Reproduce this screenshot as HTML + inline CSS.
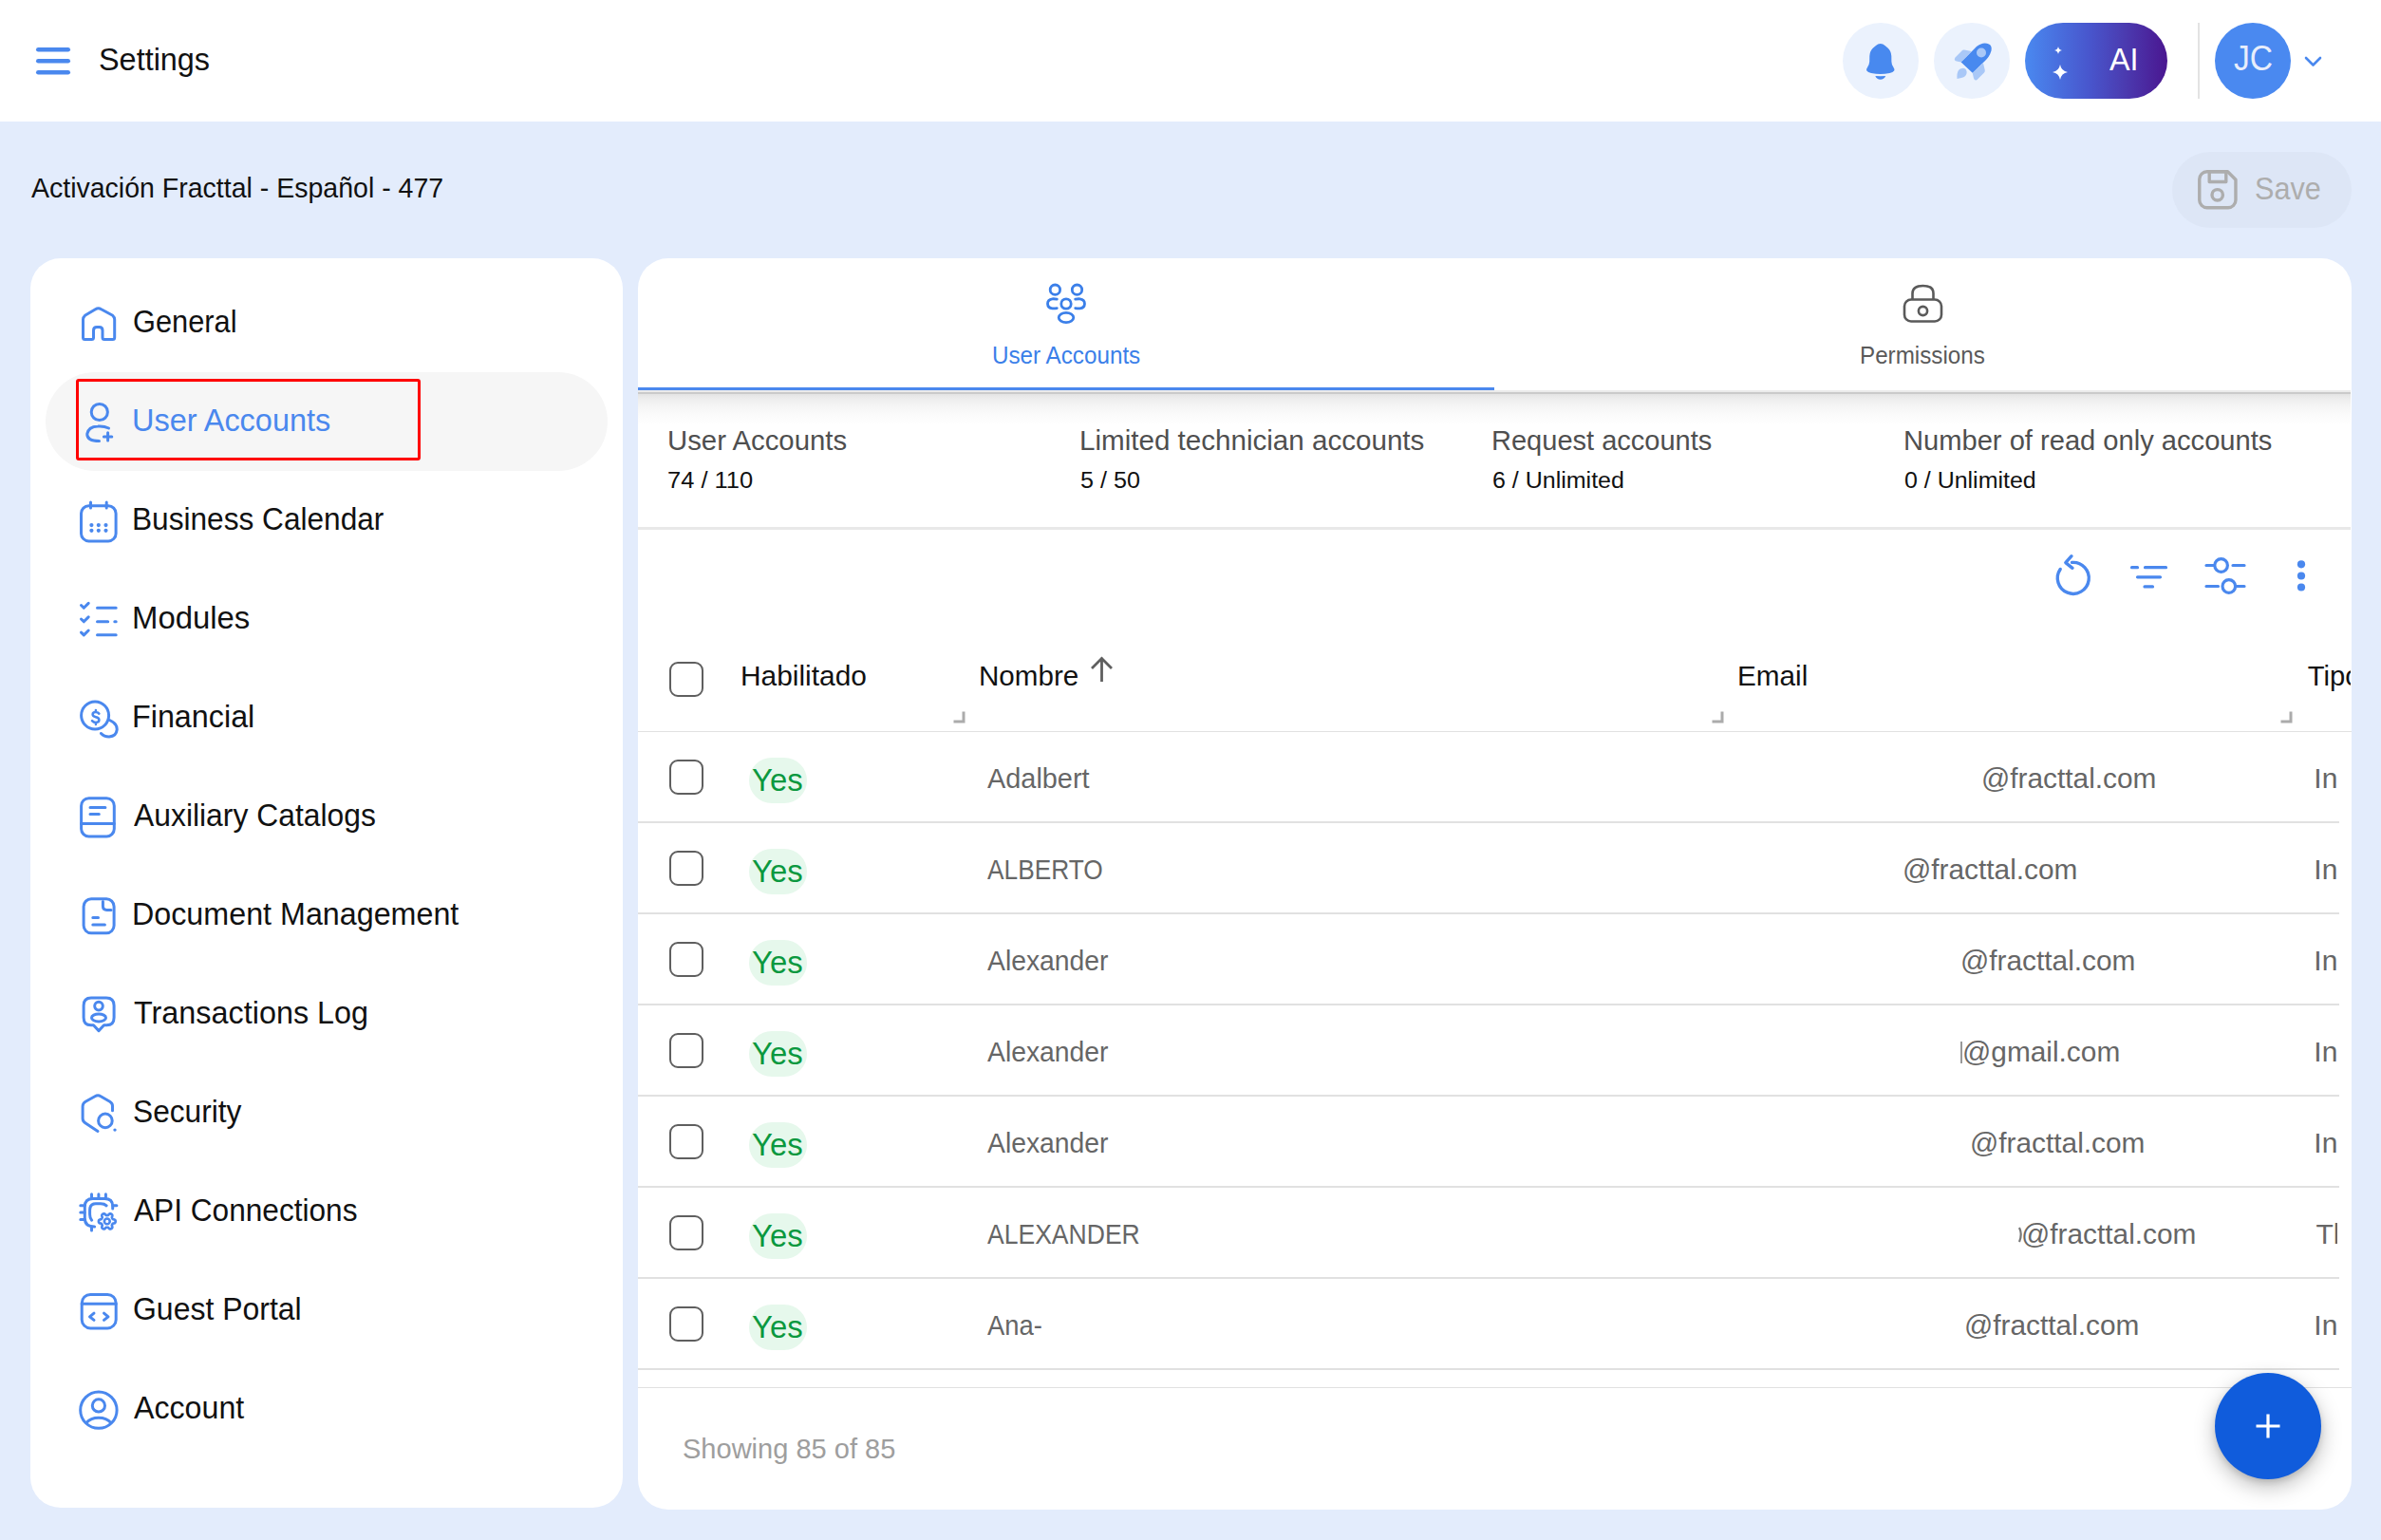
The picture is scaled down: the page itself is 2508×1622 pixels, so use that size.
<!DOCTYPE html>
<html><head><meta charset="utf-8"><title>Settings</title>
<style>
html,body{margin:0;padding:0;}
body{width:2508px;height:1622px;position:relative;overflow:hidden;background:#E3ECFC;font-family:"Liberation Sans",sans-serif;}
.t{position:absolute;white-space:nowrap;transform-origin:0 0;font-family:"Liberation Sans",sans-serif;}
svg{overflow:visible}
</style></head><body>
<div style="position:absolute;left:0px;top:0px;width:2508px;height:128px;background:#fff"></div>
<svg style="position:absolute;left:34px;top:44px;" width="44" height="40" viewBox="0 0 44 40"><line x1="6.3" y1="8.2" x2="37.7" y2="8.2" stroke="#4A88EE" stroke-width="4.6" stroke-linecap="round"/><line x1="6.3" y1="20.2" x2="37.7" y2="20.2" stroke="#4A88EE" stroke-width="4.6" stroke-linecap="round"/><line x1="6.3" y1="32.2" x2="37.7" y2="32.2" stroke="#4A88EE" stroke-width="4.6" stroke-linecap="round"/></svg>
<div class="t" style="left:103.5px;top:46.3px;font-size:33.6px;line-height:33.6px;color:#111;transform:scaleX(0.9648);">Settings</div>
<div style="position:absolute;left:1941px;top:24px;width:80px;height:80px;background:#EBF2FD;border-radius:50%"></div>
<svg style="position:absolute;left:1941px;top:24px;" width="80" height="80" viewBox="0 0 80 80">
<path d="M39.7 21.9 Q37 22 35 24 L32 26.5 Q28.5 29.5 28.3 35 L28.2 41 Q28 43.5 26.5 46 Q24.5 49 25.3 50.5 Q26.5 52 30 53 Q35 54 39.7 54 Q44.5 54 49.5 53 Q53 52 54.2 50.5 Q55 49 53 46 Q51.5 43.5 51.4 41 L51.3 35 Q51 29.5 47.5 26.5 L44.5 24 Q42.5 22 39.7 21.9 Z" fill="#4889EF"/>
<path d="M34.3 56 Q39.7 56.3 45.2 56 Q43.5 59.8 39.7 59.8 Q36 59.8 34.3 56 Z" fill="#4889EF"/>
</svg>
<div style="position:absolute;left:2037px;top:24px;width:80px;height:80px;background:#EBF2FD;border-radius:50%"></div>
<svg style="position:absolute;left:2037px;top:24px;" width="80" height="80" viewBox="0 0 80 80">
<path d="M22.5 36.5 L29.5 29.5 Q30.5 28.3 32 28.5 L39.5 30 L28.7 41.5 L24 40.5 Q20.5 39.5 22.5 36.5 Z" fill="#A9C8F7"/>
<path d="M40.7 52.7 L52 42.5 L53.8 50 Q54 51.5 52.8 52.7 L45.5 60 Q43 61.5 42 58.5 Z" fill="#A9C8F7"/>
<path d="M29.9 47.9 Q34 47.5 34.7 51.9 Q34.5 57 29 58 L24.5 59 Q24 53 26 50 Q27.5 48 29.9 47.9 Z" fill="#A9C8F7"/>
<path d="M28.7 41.5 L45 25 Q52 19.5 58 22.5 Q61.5 24 60.5 29.5 Q58.5 36 53.5 40.5 L40.7 52.7 Z" fill="#4889EF"/>
<circle cx="50" cy="31.5" r="5" fill="#A9C8F7"/>
</svg>
<div style="position:absolute;left:2133px;top:24px;width:150px;height:80px;border-radius:40px;background:linear-gradient(90deg,#4A89F0 0%,#4856CD 45%,#4B3BB0 70%,#4A1690 100%)"></div>
<svg style="position:absolute;left:2133px;top:24px;" width="150" height="80" viewBox="0 0 150 80">
<path d="M35 25 Q35.6 28.4 39 29 Q35.6 29.6 35 33 Q34.4 29.6 31 29 Q34.4 28.4 35 25 Z" fill="#fff"/>
<path d="M37 44 Q38.2 50.8 45 52 Q38.2 53.2 37 60 Q35.8 53.2 29 52 Q35.8 50.8 37 44 Z" fill="#fff"/>
</svg>
<div class="t" style="left:2222.0px;top:46.3px;font-size:33px;line-height:33px;color:#fff;transform:scaleX(0.9804);">AI</div>
<div style="position:absolute;left:2315px;top:24px;width:2px;height:80px;background:#E3E3E3"></div>
<div style="position:absolute;left:2333px;top:24px;width:80px;height:80px;background:#4A89F0;border-radius:50%"></div>
<div class="t" style="left:2352.5px;top:44.4px;font-size:36px;line-height:36px;color:#E8EEFB;transform:scaleX(0.9330);">JC</div>
<svg style="position:absolute;left:2424px;top:54px;" width="26" height="20" viewBox="0 0 26 20"><polyline points="5,7 12.5,14.5 20,7" fill="none" stroke="#4A88EE" stroke-width="2.6" stroke-linecap="round" stroke-linejoin="round"/></svg>
<div class="t" style="left:32.6px;top:183.1px;font-size:29.6px;line-height:29.6px;color:#111;transform:scaleX(0.9632);">Activación Fracttal - Español - 477</div>
<div style="position:absolute;left:2288px;top:160px;width:189px;height:80px;background:#DDE6F6;border-radius:40px"></div>
<svg style="position:absolute;left:2311px;top:175px;" width="50" height="50" viewBox="0 0 50 50">
<path d="M13.75 5.75 H35.5 L43.95 14.2 V35.75 A8 8 0 0 1 35.95 43.75 H13.75 A8 8 0 0 1 5.75 35.75 V13.75 A8 8 0 0 1 13.75 5.75 Z" fill="none" stroke="#ADADAD" stroke-width="3.4" stroke-linejoin="round"/>
<rect x="16.2" y="5.75" width="17.6" height="10.75" fill="none" stroke="#ADADAD" stroke-width="3.4" stroke-linejoin="round"/>
<circle cx="24.7" cy="30.3" r="5.7" fill="none" stroke="#ADADAD" stroke-width="3.4"/>
</svg>
<div class="t" style="left:2375.4px;top:182.2px;font-size:33.5px;line-height:33.5px;color:#ADADAD;transform:scaleX(0.9132);">Save</div>
<div style="position:absolute;left:32px;top:272px;width:624px;height:1316px;background:#fff;border-radius:32px"></div>
<div style="position:absolute;left:48px;top:392px;width:592px;height:104px;background:#F6F6F6;border-radius:52px"></div>
<div style="position:absolute;left:80px;top:399px;width:363px;height:86px;border:3.5px solid #FF0000;border-radius:3px;box-sizing:border-box"></div>
<div class="t" style="left:139.8px;top:321.7px;font-size:33.6px;line-height:33.6px;color:#111;transform:scaleX(0.9171);">General</div>
<div class="t" style="left:138.9px;top:425.7px;font-size:33.6px;line-height:33.6px;color:#4A88EE;transform:scaleX(0.9664);">User Accounts</div>
<div class="t" style="left:138.8px;top:529.7px;font-size:33.6px;line-height:33.6px;color:#111;transform:scaleX(0.9415);">Business Calendar</div>
<div class="t" style="left:138.7px;top:633.7px;font-size:33.6px;line-height:33.6px;color:#111;transform:scaleX(0.9793);">Modules</div>
<div class="t" style="left:138.7px;top:737.7px;font-size:33.6px;line-height:33.6px;color:#111;transform:scaleX(0.9620);">Financial</div>
<div class="t" style="left:141.3px;top:841.7px;font-size:33.6px;line-height:33.6px;color:#111;transform:scaleX(0.9485);">Auxiliary Catalogs</div>
<div class="t" style="left:138.7px;top:945.7px;font-size:33.6px;line-height:33.6px;color:#111;transform:scaleX(0.9608);">Document Management</div>
<div class="t" style="left:140.7px;top:1049.7px;font-size:33.6px;line-height:33.6px;color:#111;transform:scaleX(0.9638);">Transactions Log</div>
<div class="t" style="left:139.9px;top:1153.7px;font-size:33.6px;line-height:33.6px;color:#111;transform:scaleX(0.9434);">Security</div>
<div class="t" style="left:141.3px;top:1257.7px;font-size:33.6px;line-height:33.6px;color:#111;transform:scaleX(0.9416);">API Connections</div>
<div class="t" style="left:139.7px;top:1361.7px;font-size:33.6px;line-height:33.6px;color:#111;transform:scaleX(0.9519);">Guest Portal</div>
<div class="t" style="left:141.3px;top:1465.7px;font-size:33.6px;line-height:33.6px;color:#111;transform:scaleX(0.9577);">Account</div>
<svg style="position:absolute;left:80px;top:316.6px;" width="48" height="48" viewBox="0 0 48 48"><path d="M7.5 38.4 V19.5 Q7.5 17 9.5 15.3 L20.5 8.7 Q23.6 6.8 26.7 8.7 L38.7 15.3 Q40.7 17 40.7 19.5 V38.4 Q40.7 40.4 38.7 40.4 H30 Q28 40.4 28 38.4 V31 Q28 27.4 24.5 27.4 H22 Q18.5 27.4 18.5 31 V38.4 Q18.5 40.4 16.5 40.4 H9.5 Q7.5 40.4 7.5 38.4 Z" fill="none" stroke="#4A88EE" stroke-width="3" stroke-linecap="round" stroke-linejoin="round"/></svg>
<svg style="position:absolute;left:80px;top:420.6px;" width="48" height="48" viewBox="0 0 48 48"><circle cx="24.8" cy="13" r="8.6" fill="none" stroke="#4A88EE" stroke-width="3" stroke-linecap="round" stroke-linejoin="round"/><path d="M34.5 30 Q29.5 27.5 23 28 Q13 28.5 11.8 36 Q11.5 43.5 24.5 43.5" fill="none" stroke="#4A88EE" stroke-width="3" stroke-linecap="round" stroke-linejoin="round"/><path d="M29.4 38.9 H37.8 M33.6 34.7 V43.1" fill="none" stroke="#4A88EE" stroke-width="3" stroke-linecap="round" stroke-linejoin="round"/></svg>
<svg style="position:absolute;left:80px;top:524.6px;" width="48" height="48" viewBox="0 0 48 48"><rect x="5.5" y="7.8" width="36.6" height="37.1" rx="8" fill="none" stroke="#4A88EE" stroke-width="3" stroke-linecap="round" stroke-linejoin="round"/><path d="M15.5 3.9 V10 M32.2 3.9 V10" fill="none" stroke="#4A88EE" stroke-width="3" stroke-linecap="round" stroke-linejoin="round"/><g fill="#4A88EE"><circle cx="16.4" cy="28.1" r="2.1"/><circle cx="23.8" cy="28.1" r="2.1"/><circle cx="31.5" cy="28.1" r="2.1"/><circle cx="16.4" cy="33.8" r="2.1"/><circle cx="23.8" cy="33.8" r="2.1"/><circle cx="31.5" cy="33.8" r="2.1"/></g></svg>
<svg style="position:absolute;left:80px;top:628.6px;" width="48" height="48" viewBox="0 0 48 48"><path d="M5.5 8.5 L8.3 11.3 L13.2 6.4 M5.5 23 L8.3 25.8 L13.2 20.9 M5.5 37.1 L8.3 39.9 L13.2 35 M22.5 11.2 H42.2 M22.5 25.7 H33.7 M40.8 25.7 H42.2 M22.5 39.8 H42.2" fill="none" stroke="#4A88EE" stroke-width="3" stroke-linecap="round" stroke-linejoin="round"/></svg>
<svg style="position:absolute;left:80px;top:732.6px;" width="48" height="48" viewBox="0 0 48 48"><circle cx="20.1" cy="20.5" r="14.5" fill="none" stroke="#4A88EE" stroke-width="3" stroke-linecap="round" stroke-linejoin="round"/><path d="M35.5 25.5 Q43.5 29 43.2 35.5 Q42.5 42.5 35 43 Q29.5 43 26.5 39.5" fill="none" stroke="#4A88EE" stroke-width="3" stroke-linecap="round" stroke-linejoin="round"/><path d="M24.3 18.6 Q23 17.1 20.8 17.1 Q17.6 17.1 17.6 19.6 Q17.6 21.6 20.9 22.3 Q24.4 23 24.4 25.3 Q24.4 27.9 21 27.9 Q18.5 27.9 17 26.1 M20.9 15 V17 M20.9 28 V30" fill="none" stroke="#4A88EE" stroke-width="2.5" stroke-linecap="round" stroke-linejoin="round"/></svg>
<svg style="position:absolute;left:80px;top:836.6px;" width="48" height="48" viewBox="0 0 48 48"><rect x="5.6" y="3.7" width="34.7" height="40.3" rx="8" fill="none" stroke="#4A88EE" stroke-width="3" stroke-linecap="round" stroke-linejoin="round"/><path d="M5.6 30.4 H40.3 M15 13.5 H30.9 M15 20.4 H24.3" fill="none" stroke="#4A88EE" stroke-width="3" stroke-linecap="round" stroke-linejoin="round"/></svg>
<svg style="position:absolute;left:80px;top:940.6px;" width="48" height="48" viewBox="0 0 48 48"><rect x="8.1" y="5.8" width="32" height="36" rx="8" fill="none" stroke="#4A88EE" stroke-width="3" stroke-linecap="round" stroke-linejoin="round"/><path d="M28.4 8.4 V13.2 Q28.4 17.4 32.6 17.4 H37" fill="none" stroke="#4A88EE" stroke-width="3" stroke-linecap="round" stroke-linejoin="round"/><path d="M17.8 25.6 H23.5 M17.8 33 H30.4" fill="none" stroke="#4A88EE" stroke-width="3" stroke-linecap="round" stroke-linejoin="round"/></svg>
<svg style="position:absolute;left:80px;top:1044.6px;" width="48" height="48" viewBox="0 0 48 48"><path d="M16 5.9 H32 Q40.1 5.9 40.1 14 V26.8 Q40.1 34.8 32.3 34.8 H29.5 L24 40.6 L18.5 34.8 H15.9 Q8.1 34.8 8.1 26.8 V14 Q8.1 5.9 16 5.9 Z" fill="none" stroke="#4A88EE" stroke-width="3" stroke-linecap="round" stroke-linejoin="round"/><circle cx="24" cy="14.6" r="4.3" fill="none" stroke="#4A88EE" stroke-width="3" stroke-linecap="round" stroke-linejoin="round"/><ellipse cx="24" cy="26.9" rx="7.5" ry="4" fill="none" stroke="#4A88EE" stroke-width="3" stroke-linecap="round" stroke-linejoin="round"/></svg>
<svg style="position:absolute;left:80px;top:1148.6px;" width="48" height="48" viewBox="0 0 48 48"><path d="M38.5 20.7 V15.8 Q38.5 12.8 35.7 11.2 L26.2 5.7 Q23.1 4 20 5.7 L10.1 11.2 Q7.1 13 7.1 16.2 V29 Q7.1 32 9.8 33.8 L23 42.5" fill="none" stroke="#4A88EE" stroke-width="3" stroke-linecap="round" stroke-linejoin="round"/><circle cx="30.9" cy="31.4" r="7.3" fill="none" stroke="#4A88EE" stroke-width="3" stroke-linecap="round" stroke-linejoin="round"/><circle cx="41" cy="41.1" r="1.7" fill="#4A88EE"/></svg>
<svg style="position:absolute;left:80px;top:1252.6px;" width="48" height="48" viewBox="0 0 48 48"><path d="M38.7 20 V17.5 Q38.7 9.6 30.2 9.6 H17.8 Q9.3 9.6 9.3 18 V30 Q9.3 39 19.6 39" fill="none" stroke="#4A88EE" stroke-width="3" stroke-linecap="round" stroke-linejoin="round"/><path d="M32.1 16.8 Q30 14.8 26 14.8 H21 Q14.6 14.8 14.6 21.5 V26 Q14.6 30 16.6 32.2" fill="none" stroke="#4A88EE" stroke-width="3" stroke-linecap="round" stroke-linejoin="round"/><path d="M16.5 4.8 V8.5 M23.9 4.8 V8.5 M31.4 4.8 V8.5 M4.8 16.7 H9.1 M4.8 24.1 H9.1 M4.8 31.5 H9.1 M38.9 16.7 H42.9 M16.5 39.3 V43" fill="none" stroke="#4A88EE" stroke-width="3" stroke-linecap="round" stroke-linejoin="round"/><path d="M41.65 33.40 L41.62 33.86 L41.54 34.32 L41.33 34.75 L40.89 35.12 L40.14 35.37 L39.39 35.54 L38.93 35.75 L38.66 36.01 L38.47 36.29 L38.30 36.57 L38.14 36.87 L37.99 37.17 L37.90 37.53 L37.95 38.04 L38.17 38.77 L38.33 39.54 L38.23 40.11 L37.96 40.51 L37.61 40.81 L37.22 41.06 L36.81 41.27 L36.37 41.42 L35.89 41.46 L35.35 41.26 L34.77 40.74 L34.24 40.18 L33.83 39.88 L33.47 39.78 L33.13 39.75 L32.80 39.75 L32.47 39.75 L32.13 39.78 L31.77 39.88 L31.36 40.18 L30.83 40.74 L30.25 41.26 L29.71 41.46 L29.23 41.42 L28.79 41.27 L28.38 41.06 L27.99 40.81 L27.64 40.51 L27.37 40.11 L27.27 39.54 L27.43 38.77 L27.65 38.04 L27.70 37.53 L27.61 37.17 L27.46 36.87 L27.30 36.57 L27.13 36.29 L26.94 36.01 L26.67 35.75 L26.21 35.54 L25.46 35.37 L24.71 35.12 L24.27 34.75 L24.06 34.32 L23.98 33.86 L23.95 33.40 L23.98 32.94 L24.06 32.48 L24.27 32.05 L24.71 31.68 L25.46 31.43 L26.21 31.26 L26.67 31.05 L26.94 30.79 L27.13 30.51 L27.30 30.23 L27.46 29.93 L27.61 29.63 L27.70 29.27 L27.65 28.76 L27.43 28.03 L27.27 27.26 L27.37 26.69 L27.64 26.29 L27.99 25.99 L28.37 25.74 L28.79 25.53 L29.23 25.38 L29.71 25.34 L30.25 25.54 L30.83 26.06 L31.36 26.62 L31.77 26.92 L32.13 27.02 L32.47 27.05 L32.80 27.05 L33.13 27.05 L33.47 27.02 L33.83 26.92 L34.24 26.62 L34.77 26.06 L35.35 25.54 L35.89 25.34 L36.37 25.38 L36.81 25.53 L37.22 25.74 L37.61 25.99 L37.96 26.29 L38.23 26.69 L38.33 27.26 L38.17 28.03 L37.95 28.76 L37.90 29.27 L37.99 29.63 L38.14 29.93 L38.30 30.23 L38.47 30.51 L38.66 30.79 L38.93 31.05 L39.39 31.26 L40.14 31.43 L40.89 31.68 L41.33 32.05 L41.54 32.48 L41.62 32.94 L41.65 33.40 Z" fill="none" stroke="#4A88EE" stroke-width="2.7" stroke-linejoin="round"/><circle cx="32.8" cy="33.4" r="2.9" fill="none" stroke="#4A88EE" stroke-width="2.6"/></svg>
<svg style="position:absolute;left:80px;top:1356.6px;" width="48" height="48" viewBox="0 0 48 48"><rect x="6.2" y="6.4" width="36" height="35.5" rx="9" fill="none" stroke="#4A88EE" stroke-width="3" stroke-linecap="round" stroke-linejoin="round"/><path d="M6.2 16.2 H42.2 M19 26.2 L14.5 29.8 L19 33.4 M29.5 26.2 L34 29.8 L29.5 33.4" fill="none" stroke="#4A88EE" stroke-width="3" stroke-linecap="round" stroke-linejoin="round"/></svg>
<svg style="position:absolute;left:80px;top:1460.6px;" width="48" height="48" viewBox="0 0 48 48"><circle cx="23.9" cy="24.15" r="19.2" fill="none" stroke="#4A88EE" stroke-width="3" stroke-linecap="round" stroke-linejoin="round"/><circle cx="23.9" cy="19.4" r="6.6" fill="none" stroke="#4A88EE" stroke-width="3" stroke-linecap="round" stroke-linejoin="round"/><path d="M11 37.5 Q15.5 32.2 23.9 32.2 Q32.3 32.2 36.8 37.5" fill="none" stroke="#4A88EE" stroke-width="3" stroke-linecap="round" stroke-linejoin="round"/></svg>
<div style="position:absolute;left:672px;top:272px;width:1805px;height:1318px;background:#fff;border-radius:32px;overflow:hidden"></div>
<div style="position:absolute;left:672px;top:411px;width:1804px;height:2px;background:#EBEBEB"></div>
<div style="position:absolute;left:672px;top:413px;width:1804px;height:1.6px;background:#CACACA"></div>
<div style="position:absolute;left:672px;top:414.6px;width:1804px;height:32px;background:linear-gradient(#E4E4E4 0%,#EDEDED 15%,#F5F5F5 40%,#FAFAFA 65%,rgba(255,255,255,0) 100%)"></div>
<div style="position:absolute;left:672px;top:408px;width:902px;height:3px;background:#4A88EE"></div>
<svg style="position:absolute;left:1095px;top:290px;" width="56" height="56" viewBox="0 0 56 56">
<g fill="none" stroke="#3B7FE9" stroke-width="2.8" stroke-linecap="round">
<circle cx="16.4" cy="15.2" r="5.2"/><circle cx="39.5" cy="15.2" r="5.2"/><circle cx="28" cy="30" r="5.2"/>
<path d="M18.3 25.2 Q15.5 24.6 13.5 24.8 Q8.5 25.4 8.5 29.9 Q8.7 34.5 13.5 34.9 Q15.5 35.1 18.3 34.6"/>
<path d="M37.7 25.2 Q40.5 24.6 42.5 24.8 Q47.5 25.4 47.5 29.9 Q47.3 34.5 42.5 34.9 Q40.5 35.1 37.7 34.6"/>
<ellipse cx="28" cy="44.5" rx="7.8" ry="5.2"/>
</g></svg>
<div class="t" style="left:1044.7px;top:360.5px;font-size:26.5px;line-height:26.5px;color:#3B7FE9;transform:scaleX(0.9144);">User Accounts</div>
<svg style="position:absolute;left:2000px;top:292px;" width="52" height="52" viewBox="0 0 52 52">
<g fill="none" stroke="#5A5A5A" stroke-width="2.6">
<path d="M14.5 23.5 V17 Q14.5 9 25.5 9 Q36.5 9 36.5 17 V23.5"/>
<rect x="6" y="23.5" width="39" height="23" rx="7"/>
<circle cx="25.5" cy="35.5" r="4.6"/>
</g></svg>
<div class="t" style="left:1958.7px;top:360.5px;font-size:26.5px;line-height:26.5px;color:#5A5A5A;transform:scaleX(0.9133);">Permissions</div>
<div class="t" style="left:702.5px;top:449.4px;font-size:30px;line-height:30px;color:#4F4F4F;transform:scaleX(0.9776);">User Accounts</div>
<div class="t" style="left:703.4px;top:493.8px;font-size:24.6px;line-height:24.6px;color:#111;transform:scaleX(1.0354);">74 / 110</div>
<div class="t" style="left:1136.6px;top:449.4px;font-size:30px;line-height:30px;color:#4F4F4F;transform:scaleX(0.9860);">Limited technician accounts</div>
<div class="t" style="left:1138.0px;top:493.8px;font-size:24.6px;line-height:24.6px;color:#111;transform:scaleX(1.0225);">5 / 50</div>
<div class="t" style="left:1570.5px;top:449.4px;font-size:30px;line-height:30px;color:#4F4F4F;transform:scaleX(0.9675);">Request accounts</div>
<div class="t" style="left:1571.5px;top:493.8px;font-size:24.6px;line-height:24.6px;color:#111;transform:scaleX(1.0163);">6 / Unlimited</div>
<div class="t" style="left:2004.9px;top:449.4px;font-size:30px;line-height:30px;color:#4F4F4F;transform:scaleX(0.9704);">Number of read only accounts</div>
<div class="t" style="left:2006.2px;top:493.8px;font-size:24.6px;line-height:24.6px;color:#111;transform:scaleX(1.0144);">0 / Unlimited</div>
<div style="position:absolute;left:672px;top:555px;width:1804px;height:3px;background:#E8E8E8"></div>
<svg style="position:absolute;left:2160px;top:580px;" width="50" height="52" viewBox="0 0 50 52"><g fill="none" stroke="#4A88EE" stroke-width="3.4" stroke-linecap="round" stroke-linejoin="round">
<path d="M10.2 19.5 A16.5 16.5 0 1 0 22.5 12.4"/>
<path d="M22 5.7 L15.8 12.6 L23 18.3"/></g></svg>
<svg style="position:absolute;left:2238px;top:588px;" width="52" height="36" viewBox="0 0 52 36"><g fill="none" stroke="#4A88EE" stroke-width="3.2" stroke-linecap="round">
<path d="M7.5 9.7 H13.5 M21.5 9.7 H43.5 M13.5 19.8 H37.5 M21 29.9 H29.5"/></g></svg>
<svg style="position:absolute;left:2316px;top:580px;" width="56" height="52" viewBox="0 0 56 52"><g fill="none" stroke="#4A88EE" stroke-width="3.2" stroke-linecap="round">
<path d="M8 15.5 H16 M36 15.5 H48 M8 37.5 H20.5 M40 37.5 H48"/>
<circle cx="23.6" cy="15.5" r="6.8"/><circle cx="31.8" cy="37.5" r="6.8"/></g></svg>
<svg style="position:absolute;left:2410px;top:584px;" width="28" height="44" viewBox="0 0 28 44"><g fill="#4A88EE"><circle cx="14" cy="10.3" r="4.1"/><circle cx="14" cy="22.5" r="4.1"/><circle cx="14" cy="34.5" r="4.1"/></g></svg>
<div style="position:absolute;left:705px;top:697px;width:36px;height:37px;border:2.6px solid #5F5F5F;border-radius:9px;box-sizing:border-box"></div>
<div class="t" style="left:780.3px;top:698.0px;font-size:29.2px;line-height:29.2px;color:#111;transform:scaleX(1.0238);">Habilitado</div>
<div class="t" style="left:1030.6px;top:698.0px;font-size:29.2px;line-height:29.2px;color:#111;transform:scaleX(1.0134);">Nombre</div>
<svg style="position:absolute;left:1144px;top:688px;" width="32" height="32" viewBox="0 0 32 32"><path d="M16.5 28.5 V6 M7 15 L16.5 5.5 L26 15" fill="none" stroke="#5F5F5F" stroke-width="2.8" stroke-linecap="square"/></svg>
<div class="t" style="left:1829.6px;top:698.0px;font-size:29.2px;line-height:29.2px;color:#111;transform:scaleX(1.0179);">Email</div>
<div style="position:absolute;left:2420px;top:0;width:56px;height:1622px;overflow:hidden">
<div class="t" style="left:10.8px;top:698.0px;font-size:29.2px;line-height:29.2px;color:#111;">Tipo</div>
</div>
<svg style="position:absolute;left:1003px;top:748px;" width="16" height="16" viewBox="0 0 16 16"><path d="M12 1.5 V12 H1.5" fill="none" stroke="#ABABAB" stroke-width="3"/></svg>
<svg style="position:absolute;left:1802px;top:748px;" width="16" height="16" viewBox="0 0 16 16"><path d="M12 1.5 V12 H1.5" fill="none" stroke="#ABABAB" stroke-width="3"/></svg>
<svg style="position:absolute;left:2401px;top:748px;" width="16" height="16" viewBox="0 0 16 16"><path d="M12 1.5 V12 H1.5" fill="none" stroke="#ABABAB" stroke-width="3"/></svg>
<div style="position:absolute;left:672px;top:769.8px;width:1805px;height:1.6px;background:#E1E1E1"></div>
<div style="position:absolute;left:705px;top:800px;width:36px;height:37px;border:2.6px solid #5F5F5F;border-radius:9px;box-sizing:border-box"></div>
<div style="position:absolute;left:789px;top:798px;width:61px;height:48px;background:#E6F8EC;border-radius:24px"></div>
<div class="t" style="left:792.0px;top:805.9px;font-size:32.6px;line-height:32.6px;color:#0B983F;transform:scaleX(1.0101);">Yes</div>
<div class="t" style="left:1039.8px;top:805.0px;font-size:30px;line-height:30px;color:#666;transform:scaleX(0.9628);">Adalbert</div>
<div class="t" style="left:2086.9px;top:805.0px;font-size:30px;line-height:30px;color:#666;transform:scaleX(0.9945);">@fracttal.com</div>
<div style="position:absolute;left:672px;top:865.3px;width:1792px;height:1.6px;background:#E1E1E1"></div>
<div style="position:absolute;left:705px;top:896px;width:36px;height:37px;border:2.6px solid #5F5F5F;border-radius:9px;box-sizing:border-box"></div>
<div style="position:absolute;left:789px;top:894px;width:61px;height:48px;background:#E6F8EC;border-radius:24px"></div>
<div class="t" style="left:792.0px;top:901.9px;font-size:32.6px;line-height:32.6px;color:#0B983F;transform:scaleX(1.0101);">Yes</div>
<div class="t" style="left:1039.8px;top:901.0px;font-size:30px;line-height:30px;color:#666;transform:scaleX(0.8760);">ALBERTO</div>
<div class="t" style="left:2003.6px;top:901.0px;font-size:30px;line-height:30px;color:#666;transform:scaleX(0.9945);">@fracttal.com</div>
<div style="position:absolute;left:672px;top:961.3px;width:1792px;height:1.6px;background:#E1E1E1"></div>
<div style="position:absolute;left:705px;top:992px;width:36px;height:37px;border:2.6px solid #5F5F5F;border-radius:9px;box-sizing:border-box"></div>
<div style="position:absolute;left:789px;top:990px;width:61px;height:48px;background:#E6F8EC;border-radius:24px"></div>
<div class="t" style="left:792.0px;top:997.9px;font-size:32.6px;line-height:32.6px;color:#0B983F;transform:scaleX(1.0101);">Yes</div>
<div class="t" style="left:1039.8px;top:997.0px;font-size:30px;line-height:30px;color:#666;transform:scaleX(0.9439);">Alexander</div>
<div class="t" style="left:2064.6px;top:997.0px;font-size:30px;line-height:30px;color:#666;transform:scaleX(0.9945);">@fracttal.com</div>
<div style="position:absolute;left:672px;top:1057.3px;width:1792px;height:1.6px;background:#E1E1E1"></div>
<div style="position:absolute;left:705px;top:1088px;width:36px;height:37px;border:2.6px solid #5F5F5F;border-radius:9px;box-sizing:border-box"></div>
<div style="position:absolute;left:789px;top:1086px;width:61px;height:48px;background:#E6F8EC;border-radius:24px"></div>
<div class="t" style="left:792.0px;top:1093.9px;font-size:32.6px;line-height:32.6px;color:#0B983F;transform:scaleX(1.0101);">Yes</div>
<div class="t" style="left:1039.8px;top:1093.0px;font-size:30px;line-height:30px;color:#666;transform:scaleX(0.9439);">Alexander</div>
<div class="t" style="left:2066.6px;top:1093.0px;font-size:30px;line-height:30px;color:#666;transform:scaleX(0.9945);">@gmail.com</div>
<div style="position:absolute;left:672px;top:1153.3px;width:1792px;height:1.6px;background:#E1E1E1"></div>
<div style="position:absolute;left:705px;top:1184px;width:36px;height:37px;border:2.6px solid #5F5F5F;border-radius:9px;box-sizing:border-box"></div>
<div style="position:absolute;left:789px;top:1182px;width:61px;height:48px;background:#E6F8EC;border-radius:24px"></div>
<div class="t" style="left:792.0px;top:1189.9px;font-size:32.6px;line-height:32.6px;color:#0B983F;transform:scaleX(1.0101);">Yes</div>
<div class="t" style="left:1039.8px;top:1189.0px;font-size:30px;line-height:30px;color:#666;transform:scaleX(0.9439);">Alexander</div>
<div class="t" style="left:2075.0px;top:1189.0px;font-size:30px;line-height:30px;color:#666;transform:scaleX(0.9945);">@fracttal.com</div>
<div style="position:absolute;left:672px;top:1249.3px;width:1792px;height:1.6px;background:#E1E1E1"></div>
<div style="position:absolute;left:705px;top:1280px;width:36px;height:37px;border:2.6px solid #5F5F5F;border-radius:9px;box-sizing:border-box"></div>
<div style="position:absolute;left:789px;top:1278px;width:61px;height:48px;background:#E6F8EC;border-radius:24px"></div>
<div class="t" style="left:792.0px;top:1285.9px;font-size:32.6px;line-height:32.6px;color:#0B983F;transform:scaleX(1.0101);">Yes</div>
<div class="t" style="left:1039.8px;top:1285.0px;font-size:30px;line-height:30px;color:#666;transform:scaleX(0.8846);">ALEXANDER</div>
<div class="t" style="left:2129.3px;top:1285.0px;font-size:30px;line-height:30px;color:#666;transform:scaleX(0.9945);">@fracttal.com</div>
<div style="position:absolute;left:672px;top:1345.3px;width:1792px;height:1.6px;background:#E1E1E1"></div>
<div style="position:absolute;left:705px;top:1376px;width:36px;height:37px;border:2.6px solid #5F5F5F;border-radius:9px;box-sizing:border-box"></div>
<div style="position:absolute;left:789px;top:1374px;width:61px;height:48px;background:#E6F8EC;border-radius:24px"></div>
<div class="t" style="left:792.0px;top:1381.9px;font-size:32.6px;line-height:32.6px;color:#0B983F;transform:scaleX(1.0101);">Yes</div>
<div class="t" style="left:1039.8px;top:1381.0px;font-size:30px;line-height:30px;color:#666;transform:scaleX(0.9130);">Ana-</div>
<div class="t" style="left:2068.6px;top:1381.0px;font-size:30px;line-height:30px;color:#666;transform:scaleX(0.9945);">@fracttal.com</div>
<div style="position:absolute;left:672px;top:1441.3px;width:1792px;height:1.6px;background:#E1E1E1"></div>
<div style="position:absolute;left:2420px;top:0;width:42px;height:1622px;overflow:hidden">
<div class="t" style="left:17.3px;top:805.0px;font-size:30px;line-height:30px;color:#666;">In</div>
<div class="t" style="left:17.3px;top:901.0px;font-size:30px;line-height:30px;color:#666;">In</div>
<div class="t" style="left:17.3px;top:997.0px;font-size:30px;line-height:30px;color:#666;">In</div>
<div class="t" style="left:17.3px;top:1093.0px;font-size:30px;line-height:30px;color:#666;">In</div>
<div class="t" style="left:17.3px;top:1189.0px;font-size:30px;line-height:30px;color:#666;">In</div>
<div class="t" style="left:19.4px;top:1285.0px;font-size:30px;line-height:30px;color:#666;">Th</div>
<div class="t" style="left:17.3px;top:1381.0px;font-size:30px;line-height:30px;color:#666;">In</div>
</div>
<div style="position:absolute;left:2065px;top:1097px;width:1.6px;height:23px;background:#999"></div>
<svg style="position:absolute;left:2124px;top:1290px;" width="10" height="22" viewBox="0 0 10 22"><path d="M3 3 Q6.5 10 3 18" fill="none" stroke="#777" stroke-width="2.2"/></svg>
<div style="position:absolute;left:672px;top:1460.8px;width:1805px;height:1.6px;background:#E1E1E1"></div>
<div class="t" style="left:719.2px;top:1511.1px;font-size:29.4px;line-height:29.4px;color:#9E9E9E;transform:scaleX(0.9875);">Showing 85 of 85</div>
<div style="position:absolute;left:2333px;top:1446px;width:112px;height:112px;border-radius:50%;background:#105CDC;box-shadow:0 8px 22px rgba(0,0,0,0.26),0 3px 6px rgba(0,0,0,0.12)"></div>
<svg style="position:absolute;left:2363px;top:1476px;" width="52" height="52" viewBox="0 0 52 52"><path d="M26 13.5 V38.5 M13.5 26 H38.5" stroke="#fff" stroke-width="3.2"/></svg>
</body></html>
